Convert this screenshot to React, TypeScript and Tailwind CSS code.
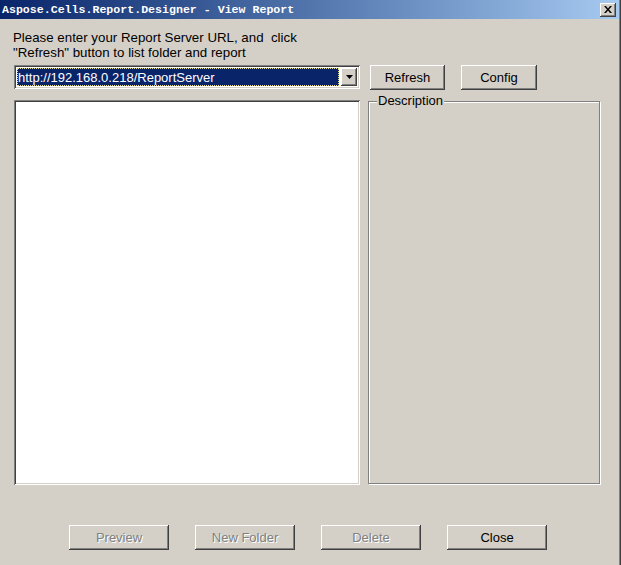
import { useState } from "react"

const raised =
  "bg-[#d4d0c8] shadow-[inset_-1px_-1px_0_#404040,inset_1px_1px_0_#ffffff,inset_-2px_-2px_0_#808080,inset_2px_2px_0_#d4d0c8]"
const sunken =
  "shadow-[inset_1px_1px_0_#808080,inset_-1px_-1px_0_#ffffff,inset_2px_2px_0_#404040,inset_-2px_-2px_0_#d4d0c8]"

const Button = ({ label, disabled, w }: { label: string; disabled?: boolean; w: string }) => (
  <button
    className={`${raised} ${w} h-[25px] flex items-center justify-center text-[13px] leading-none ${
      disabled ? "text-[#808080] [text-shadow:1px_1px_0_#ffffff]" : "text-black"
    }`}
  >
    {label}
  </button>
)

export default function App() {
  const [url] = useState("http://192.168.0.218/ReportServer")

  return (
    <div
      className="w-[621px] h-[565px] flex bg-[#d4d0c8] overflow-hidden"
      style={{ fontFamily: '"Liberation Sans", Arial, sans-serif' }}
    >
      <div className="w-[619px] flex flex-col">
        {/* title bar */}
        <div className="h-[19px] flex items-center justify-between bg-gradient-to-r from-[#0a246a] to-[#a6caf0] pl-[2px] pr-[3px]">
          <span className="text-white font-bold text-[11.6px] leading-none font-['Liberation_Mono',monospace] pt-[1px]">
            Aspose.Cells.Report.Designer - View Report
          </span>
          <div className={`${raised} w-[16px] h-[14px] flex items-center justify-center`}>
            <svg width="8" height="7" viewBox="0 0 8 7">
              <path d="M0 0h2l2 2.5L6 0h2L5 3.5 8 7H6L4 4.5 2 7H0l3-3.5z" fill="#000" />
            </svg>
          </div>
        </div>

        {/* body */}
        <div className="flex-1 flex flex-col pt-[11px]">
          <p className="pl-[13px] text-[13.3px] leading-[15px] text-black whitespace-pre">
            {"Please enter your Report Server URL, and  click\n\"Refresh\" button to list folder and report"}
          </p>

          <div className="flex items-start pl-[14px] mt-[5px]">
            <div className={`${sunken} bg-white w-[346px] h-[24px] flex items-center p-[3px] gap-[2px]`}>
              <div className="flex-1 h-full bg-[#0a246a] border border-dotted border-[#e8e090] flex items-center">
                <span className="text-white text-[13px] leading-none">{url}</span>
              </div>
              <div className={`${raised} w-[16px] h-full flex items-center justify-center`}>
                <svg width="7" height="4" viewBox="0 0 7 4">
                  <path d="M0 0h7L3.5 4z" fill="#000" />
                </svg>
              </div>
            </div>
            <div className="ml-[10px]">
              <Button label="Refresh" w="w-[75px]" />
            </div>
            <div className="ml-[16px]">
              <Button label="Config" w="w-[76px]" />
            </div>
          </div>

          <div className="flex items-start pl-[14px] mt-[10px]">
            <div className={`${sunken} bg-white w-[346px] h-[385px]`} />
            <div className="relative ml-[8px] mt-[1px] w-[232px] h-[383px] border border-[#808080] shadow-[1px_1px_0_#ffffff,inset_1px_1px_0_#ffffff]">
              <span className="absolute left-[8px] top-[-8px] px-[1px] bg-[#d4d0c8] text-[13px] leading-[14px] text-black">
                Description
              </span>
            </div>
          </div>

          <div className="flex gap-[26px] pl-[69px] mt-[40px]">
            <Button label="Preview" w="w-[100px]" disabled />
            <Button label="New Folder" w="w-[100px]" disabled />
            <Button label="Delete" w="w-[100px]" disabled />
            <Button label="Close" w="w-[100px]" />
          </div>
        </div>
      </div>
      <div className="w-[1px] bg-[#808080]" />
      <div className="w-[1px] bg-[#404040]" />
    </div>
  )
}
